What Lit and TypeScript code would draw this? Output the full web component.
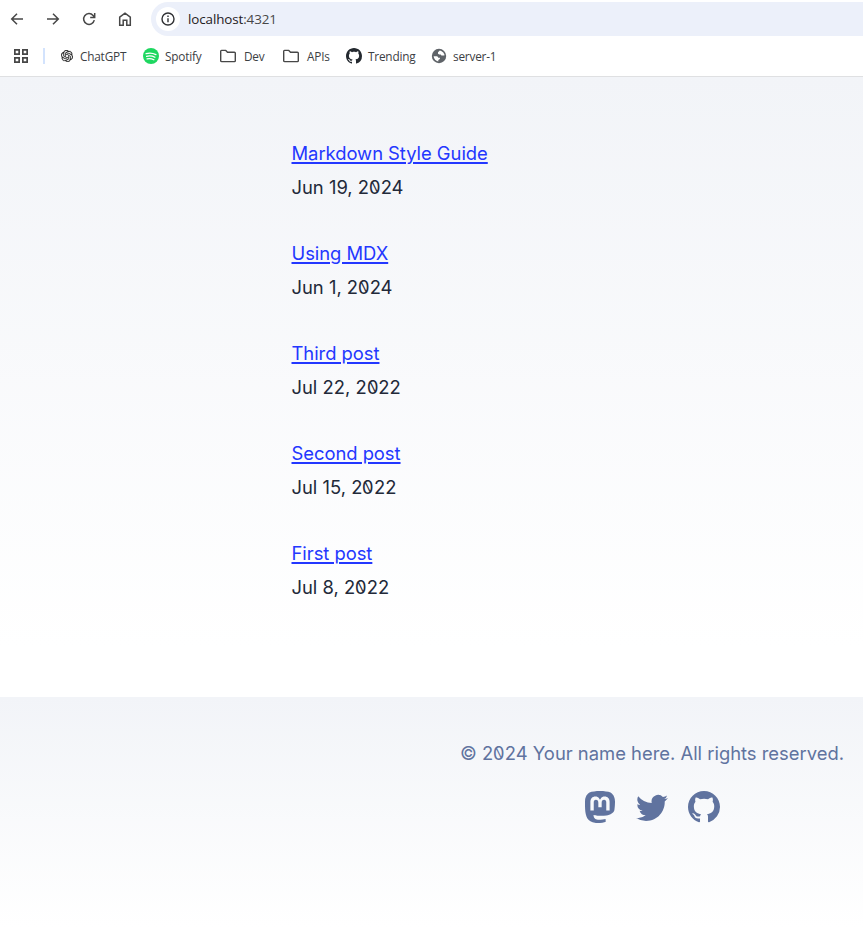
import { LitElement, html, css, svg } from "lit";
import { customElement } from "lit/decorators.js";

const github = "M8 0C3.58 0 0 3.58 0 8c0 3.54 2.29 6.53 5.47 7.59.4.07.55-.17.55-.38 0-.19-.01-.82-.01-1.49-2.01.37-2.53-.49-2.69-.94-.09-.23-.48-.94-.82-1.13-.28-.15-.68-.52-.01-.53.63-.01 1.08.58 1.23.82.72 1.21 1.87.87 2.33.66.07-.52.28-.87.51-1.07-1.78-.2-3.64-.89-3.64-3.95 0-.87.31-1.59.82-2.15-.08-.2-.36-1.02.08-2.12 0 0 .67-.21 2.2.82.64-.18 1.32-.27 2-.27.68 0 1.36.09 2 .27 1.53-1.04 2.2-.82 2.2-.82.44 1.1.16 1.92.08 2.12.51.56.82 1.27.82 2.15 0 3.07-1.87 3.75-3.65 3.95.29.25.54.73.54 1.48 0 1.07-.01 1.93-.01 2.2 0 .21.15.46.55.38A8.012 8.012 0 0 0 16 8c0-4.42-3.58-8-8-8z";
const twitter = "M5.026 15c6.038 0 9.341-5.003 9.341-9.334 0-.14 0-.282-.006-.422A6.685 6.685 0 0 0 16 3.542a6.658 6.658 0 0 1-1.889.518 3.301 3.301 0 0 0 1.447-1.817 6.533 6.533 0 0 1-2.087.793A3.286 3.286 0 0 0 7.875 6.03a9.325 9.325 0 0 1-6.767-3.429 3.289 3.289 0 0 0 1.018 4.382A3.323 3.323 0 0 1 .64 6.575v.045a3.288 3.288 0 0 0 2.632 3.218 3.203 3.203 0 0 1-.865.115 3.23 3.23 0 0 1-.614-.057 3.283 3.283 0 0 0 3.067 2.277A6.588 6.588 0 0 1 .78 13.58a6.32 6.32 0 0 1-.78-.045A9.344 9.344 0 0 0 5.026 15z";
const mastodon = "M11.19 12.195c2.016-.24 3.77-1.475 3.99-2.603.348-1.778.32-4.339.32-4.339 0-3.47-2.286-4.488-2.286-4.488C12.062.238 10.083.017 8.027 0h-.05C5.92.017 3.942.238 2.79.765c0 0-2.285 1.017-2.285 4.488l-.002.662c-.004.64-.007 1.35.011 2.091.083 3.394.626 6.74 3.78 7.57 1.454.383 2.703.463 3.709.408 1.823-.1 2.847-.647 2.847-.647l-.06-1.317s-1.303.41-2.767.36c-1.45-.05-2.98-.156-3.215-1.928a3.614 3.614 0 0 1-.033-.496s1.424.346 3.228.428c1.103.05 2.137-.064 3.188-.189zm1.613-2.47H11.13v-4.08c0-.859-.364-1.295-1.091-1.295-.804 0-1.207.517-1.207 1.541v2.233H7.168V5.89c0-1.024-.403-1.541-1.207-1.541-.727 0-1.091.436-1.091 1.296v4.079H3.197V5.522c0-.859.22-1.541.66-2.046.456-.505 1.052-.764 1.793-.764.856 0 1.504.328 1.933.983L8 4.39l.417-.695c.429-.655 1.077-.983 1.934-.983.74 0 1.336.259 1.791.764.442.505.661 1.187.661 2.046v4.203z";
const openai = "M22.2819 9.8211a5.9847 5.9847 0 0 0-.5157-4.9108 6.0462 6.0462 0 0 0-6.5098-2.9A6.0651 6.0651 0 0 0 4.9807 4.1818a5.9847 5.9847 0 0 0-3.9977 2.9 6.0462 6.0462 0 0 0 .7427 7.0966 5.98 5.98 0 0 0 .511 4.9107 6.051 6.051 0 0 0 6.5146 2.9001A5.9847 5.9847 0 0 0 13.2599 24a6.0557 6.0557 0 0 0 5.7718-4.2058 5.9894 5.9894 0 0 0 3.9977-2.9001 6.0557 6.0557 0 0 0-.7475-7.0729zm-9.022 12.6081a4.4755 4.4755 0 0 1-2.8764-1.0408l.1419-.0804 4.7783-2.7582a.7948.7948 0 0 0 .3927-.6813v-6.7369l2.02 1.1686a.071.071 0 0 1 .038.052v5.5826a4.504 4.504 0 0 1-4.4945 4.4944zm-9.6607-4.1254a4.4708 4.4708 0 0 1-.5346-3.0137l.142.0852 4.783 2.7582a.7712.7712 0 0 0 .7806 0l5.8428-3.3685v2.3324a.0804.0804 0 0 1-.0332.0615L9.74 19.9502a4.4992 4.4992 0 0 1-6.1408-1.6464zM2.3408 7.8956a4.485 4.485 0 0 1 2.3655-1.9728V11.6a.7664.7664 0 0 0 .3879.6765l5.8144 3.3543-2.0201 1.1685a.0757.0757 0 0 1-.071 0l-4.8303-2.7865A4.504 4.504 0 0 1 2.3408 7.872zm16.5963 3.8558L13.1038 8.364 15.1192 7.2a.0757.0757 0 0 1 .071 0l4.8303 2.7913a4.4944 4.4944 0 0 1-.6765 8.1042v-5.6772a.79.79 0 0 0-.407-.667zm2.0107-3.0231l-.142-.0852-4.7735-2.7818a.7759.7759 0 0 0-.7854 0L9.409 9.2297V6.8974a.0662.0662 0 0 1 .0284-.0615l4.8303-2.7866a4.4992 4.4992 0 0 1 6.6802 4.66zM8.3065 12.863l-2.02-1.1638a.0804.0804 0 0 1-.038-.0567V6.0742a4.4992 4.4992 0 0 1 7.3757-3.4537l-.142.0805L8.704 5.459a.7948.7948 0 0 0-.3927.6813zm1.0976-2.3654l2.602-1.4998 2.6069 1.4998v2.9994l-2.5974 1.4997-2.6067-1.4997Z";

// Zeros carry a falling slash, drawn by mirroring the font's rising one.
const zeros = (text: string) =>
  text.split(/(0)/).map((part) => (part === "0" ? html`<span class="zero">0</span>` : part));

const base = css`
  :host { display: block; }
  svg { display: block; flex: none; }
`;

@customElement("browser-toolbar")
export class BrowserToolbar extends LitElement {
  static styles = [base, css`
    :host { height: 76px; background: #fff; border-bottom: 1px solid #dfe0e2; font-family: "Open Sans", sans-serif; color: #3c4043; }
    .nav { height: 38px; display: flex; align-items: center; padding-left: 9px; gap: 20px; color: #474747; }
    .address { flex: 1; height: 34px; margin: 0 0 0 -2px; background: #ecf0fa; border-radius: 17px 0 0 17px; display: flex; align-items: center; padding-left: 5px; }
    .info { width: 24px; height: 24px; border-radius: 50%; background: #fff; display: flex; align-items: center; justify-content: center; margin-right: 8px; }
    .url { font-size: 13.4px; line-height: 20px; color: #1f2023; letter-spacing: -0.1px; white-space: nowrap; }
    .port { color: #474747; }
    .bookmarks { height: 36px; display: flex; align-items: center; padding-left: 13px; font-size: 11.8px; line-height: 16px; }
    .divider { width: 2px; height: 16px; background: #d3e3fd; margin: 0 15px 0 14px; }
    .mark { display: flex; align-items: center; white-space: nowrap; flex: none; letter-spacing: -0.2px; }
    .mark svg { margin-right: 6px; }
    .chatgpt { width: 83px; } .spotify { width: 76px; } .dev { width: 63px; } .apis { width: 64px; } .trending { width: 85px; }
    .chatgpt svg { margin: 0 7px 0 1px; }
    .dev svg, .apis svg { margin-right: 7px; }
  `];

  folder() {
    return html`<svg width="18" height="16" viewBox="0 0 18 16" fill="none" stroke="#474747" stroke-width="1.4" stroke-linejoin="round"><path d="M1.7 3.2q0-.8.8-.8h4.3l1.7 1.8h6.9q.9 0 .9.9v7.6q0 .9-.9.9H2.6q-.9 0-.9-.9z"/></svg>`;
  }

  render() {
    return html`
      <div class="nav">
        <svg width="16" height="16" viewBox="0 0 16 16" fill="none" stroke="currentColor" stroke-width="1.5"><path d="M14 8H3M8 2.7 2.7 8 8 13.3"/></svg>
        <svg width="16" height="16" viewBox="0 0 16 16" fill="none" stroke="currentColor" stroke-width="1.5"><path d="M2 8h11M8 2.7 13.3 8 8 13.3"/></svg>
        <svg width="16" height="16" viewBox="0 0 16 16" fill="none" stroke="currentColor" stroke-width="1.5"><path d="M13.3 9.2a5.4 5.4 0 1 1-1.2-4.8L13.2 5.7M13.7 2v4.5H9.2"/></svg>
        <svg width="16" height="16" viewBox="0 0 16 16" fill="none" stroke="currentColor" stroke-width="1.5"><path d="M2.7 6.2 8 2.1l5.3 4.1v8H9.8V9.3H6.2v4.9H2.7z"/></svg>
        <div class="address">
          <div class="info"><svg width="14" height="14" viewBox="0 0 14 14"><circle cx="7" cy="7" r="6" fill="none" stroke="#303134" stroke-width="1.4"/><path d="M7 6.2v4M7 3.6v1.5" stroke="#303134" stroke-width="1.4"/></svg></div>
          <div class="url">localhost<span class="port">:4321</span></div>
        </div>
      </div>
      <div class="bookmarks">
        <svg width="16" height="16" viewBox="0 0 16 16" fill="none" stroke="#474747" stroke-width="1.7"><path d="M1.85 1.85h4.3v4.3h-4.3zM9.85 1.85h4.3v4.3h-4.3zM1.85 9.85h4.3v4.3h-4.3zM9.85 9.85h4.3v4.3h-4.3z"/></svg>
        <div class="divider"></div>
        <div class="mark chatgpt"><svg width="12" height="12" viewBox="0 0 24 24" fill="#222" stroke="#222" stroke-width=".4"><path d=${openai}/></svg>ChatGPT</div>
        <div class="mark spotify"><svg width="16" height="16" viewBox="0 0 16 16"><circle cx="8" cy="8" r="8" fill="#1ed760"/><path d="M3.1 5.7q5-1.5 9.8.9M3.6 8.3q4.4-1.1 8.3 1M4.1 10.8q3.6-.8 6.8.9" fill="none" stroke="#fff" stroke-width="1.3" stroke-linecap="round"/></svg>Spotify</div>
        <div class="mark dev">${this.folder()}Dev</div>
        <div class="mark apis">${this.folder()}APIs</div>
        <div class="mark trending"><svg width="16" height="16" viewBox="0 0 16 16" fill="#24292f"><path d=${github}/></svg>Trending</div>
        <div class="mark server"><svg width="16" height="16" viewBox="0 0 16 16"><circle cx="8" cy="8" r="7.2" fill="#5f6368"/><path d="M8.8 2.5 7 4.2v1.5l1.2.7h1.5l.7 1.1h2.7q.6 0 .4-.8Q12.8 3.8 10.2 2.9zM2.6 8.3h3.2q1.4.2 1.4 1.4h1.7v1.4l-1.6.8v1.5q-4-.5-4.7-5.1z" fill="#fff"/></svg>server-1</div>
      </div>`;
  }
}

const posts = [
  { title: "Markdown Style Guide", date: "Jun 19, 2024" },
  { title: "Using MDX", date: "Jun 1, 2024" },
  { title: "Third post", date: "Jul 22, 2022" },
  { title: "Second post", date: "Jul 15, 2022" },
  { title: "First post", date: "Jul 8, 2022" },
];

@customElement("app-root")
export class AppRoot extends LitElement {
  static styles = [base, css`
    :host { height: 927px; overflow: hidden; font-family: Inter, "Open Sans", sans-serif; font-size: 18.4px; line-height: 34px; color: #222939; }
    .page { width: 1304px; height: 850px; display: flex; flex-direction: column; background: linear-gradient(#f2f4f8, #fff 570px) no-repeat; }
    .posts { list-style: none; margin: 0 auto; padding: 59px 0 0; width: 721px; height: 561px; display: flex; flex-direction: column; gap: 32px; box-sizing: content-box; }
    .date { display: block; }
    .link { color: #2337ff; letter-spacing: -0.03px; text-decoration: underline; text-decoration-thickness: 2px; text-underline-offset: 2px; text-decoration-skip-ink: auto; }
    .zero { display: inline-block; transform: scaleX(-1); font-feature-settings: "zero"; }
    .footer { flex: 1; background: linear-gradient(#f2f4f8, #fff); color: #60739f; text-align: center; padding-top: 39px; }
    .social { display: flex; justify-content: center; gap: 20px; margin-top: 21px; }
  `];

  icon(d: string) {
    return html`<svg width="32" height="32" viewBox="0 0 16 16" fill="currentColor">${svg`<path d=${d}></path>`}</svg>`;
  }

  render() {
    return html`
      <browser-toolbar></browser-toolbar>
      <div class="page">
        <ul class="posts">
          ${posts.map((p) => html`<li><a class="link">${p.title}</a><span class="date">${zeros(p.date)}</span></li>`)}
        </ul>
        <footer class="footer">
          <div>${zeros("© 2024 Your name here. All rights reserved.")}</div>
          <div class="social">${[mastodon, twitter, github].map((d) => this.icon(d))}</div>
        </footer>
      </div>`;
  }
}
